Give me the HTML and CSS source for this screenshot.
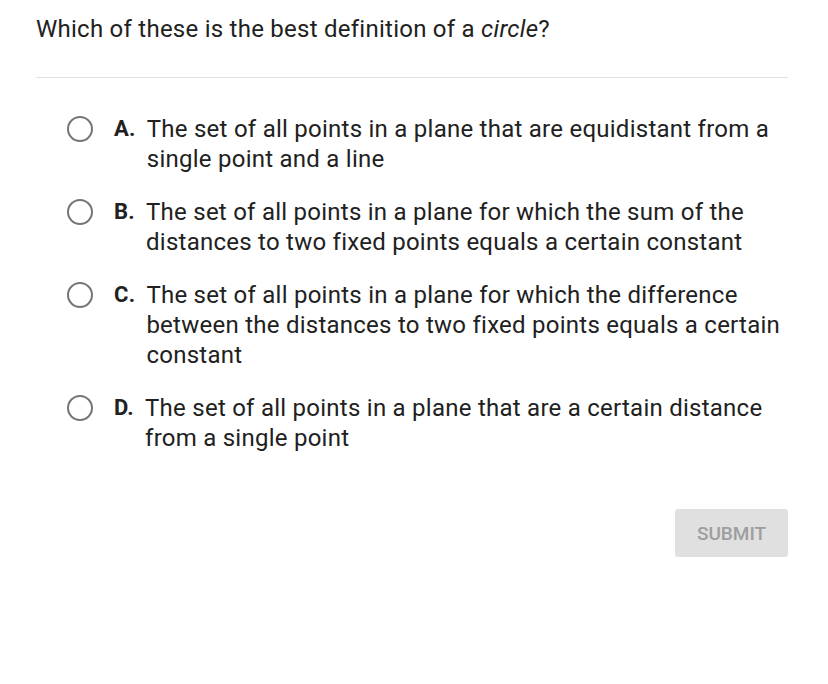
FILE: index.html
```html
<!DOCTYPE html>
<html>
<head>
<meta charset="utf-8">
<link rel="stylesheet" href="styles.css">
</head>
<body>
<div class="page">
  <div class="question">Which of these is the best definition of a <em>circle</em>?</div>
  <div class="divider"></div>
  <div class="options">
    <div class="option">
      <span class="radio"></span>
      <span class="letter">A.</span>
      <span class="text">The set of all points in a plane that are equidistant from a single point and a line</span>
    </div>
    <div class="option">
      <span class="radio"></span>
      <span class="letter">B.</span>
      <span class="text">The set of all points in a plane for which the sum of the distances to two fixed points equals a certain constant</span>
    </div>
    <div class="option">
      <span class="radio"></span>
      <span class="letter">C.</span>
      <span class="text">The set of all points in a plane for which the difference between the distances to two fixed points equals a certain constant</span>
    </div>
    <div class="option">
      <span class="radio"></span>
      <span class="letter">D.</span>
      <span class="text">The set of all points in a plane that are a certain distance from a single point</span>
    </div>
  </div>
  <div class="actions">
    <button class="submit">SUBMIT</button>
  </div>
</div>
</body>
</html>
```
FILE: styles.css
```css
html, body {
  margin: 0;
  padding: 0;
  background: #ffffff;
}
body {
  font-family: Roboto, "Liberation Sans", sans-serif;
  color: #212121;
}
.page {
  padding: 14px 40px 0 36px;
}
.question {
  font-size: 24px;
  line-height: 30px;
  letter-spacing: 0.25px;
}
.question em {
  font-style: italic;
}
.divider {
  height: 1px;
  background: #e0e0e0;
  margin-top: 33px;
}
.options {
  display: flex;
  flex-direction: column;
  gap: 23px;
  padding: 36px 0 0 31px;
}
.option {
  display: flex;
  align-items: flex-start;
  font-size: 24px;
  line-height: 30px;
  letter-spacing: 0.25px;
}
.radio {
  flex: none;
  width: 22px;
  height: 22px;
  border: 2px solid #757575;
  border-radius: 50%;
  margin-top: 2px;
  margin-right: 21px;
}
.letter {
  flex: none;
  font-weight: 700;
  font-size: 22px;
  letter-spacing: 0.3px;
  margin-right: 11px;
}
.text {
  flex: 1;
}
.actions {
  display: flex;
  justify-content: flex-end;
  margin-top: 56px;
}
.submit {
  font-family: Roboto, "Liberation Sans", sans-serif;
  font-size: 19px;
  font-weight: 500;
  color: #9e9e9e;
  background: #e0e0e0;
  border: none;
  border-radius: 3px;
  width: 113px;
  height: 48px;
  padding: 0;
}
```
